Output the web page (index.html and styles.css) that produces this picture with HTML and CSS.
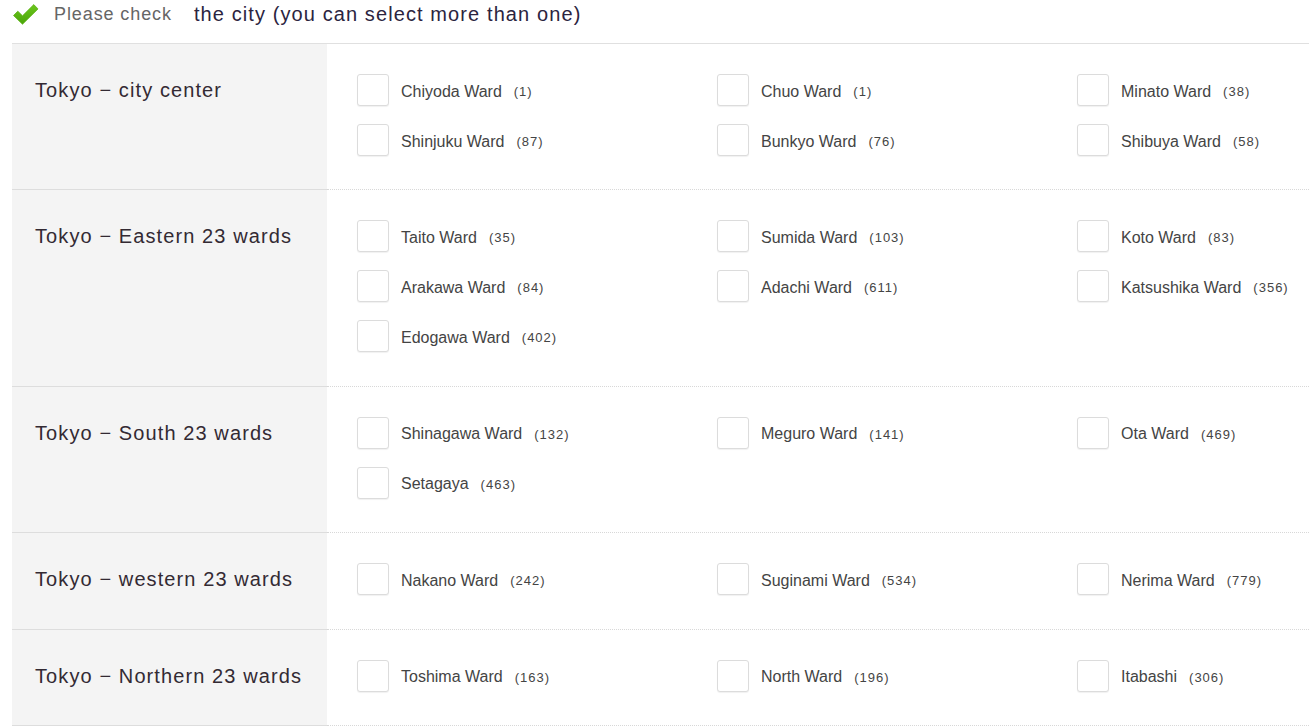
FILE: index.html
```html
<!DOCTYPE html>
<html lang="en">
<head>
<meta charset="utf-8">
<title>Select city</title>
<link rel="stylesheet" href="styles.css">
</head>
<body>
<div class="page">
  <div class="head">
    <svg class="check-icon" width="28" height="22" viewBox="0 0 28 22" aria-hidden="true">
      <defs>
        <linearGradient id="g" x1="0" y1="0" x2="0" y2="1">
          <stop offset="0" stop-color="#6cc61c"/>
          <stop offset="1" stop-color="#4aa50a"/>
        </linearGradient>
      </defs>
      <path d="M1.5 12.5 L5.8 8.2 L10.5 12.8 L21.8 1.6 L26 5.9 L10.5 21.2 Z" fill="url(#g)" stroke="#5cb314" stroke-width="0.8" stroke-linejoin="round"/>
    </svg>
    <span class="head-note">Please check</span>
    <span class="head-title">the city (you can select more than one)</span>
  </div>
  <div class="table">
    <div class="row">
      <div class="area">Tokyo − city center</div>
      <div class="wards">
        <label class="ward"><span class="box"></span><span class="name">Chiyoda Ward</span><span class="count">(1)</span></label>
        <label class="ward"><span class="box"></span><span class="name">Chuo Ward</span><span class="count">(1)</span></label>
        <label class="ward"><span class="box"></span><span class="name">Minato Ward</span><span class="count">(38)</span></label>
        <label class="ward"><span class="box"></span><span class="name">Shinjuku Ward</span><span class="count">(87)</span></label>
        <label class="ward"><span class="box"></span><span class="name">Bunkyo Ward</span><span class="count">(76)</span></label>
        <label class="ward"><span class="box"></span><span class="name">Shibuya Ward</span><span class="count">(58)</span></label>
      </div>
    </div>
    <div class="row">
      <div class="area">Tokyo − Eastern 23 wards</div>
      <div class="wards">
        <label class="ward"><span class="box"></span><span class="name">Taito Ward</span><span class="count">(35)</span></label>
        <label class="ward"><span class="box"></span><span class="name">Sumida Ward</span><span class="count">(103)</span></label>
        <label class="ward"><span class="box"></span><span class="name">Koto Ward</span><span class="count">(83)</span></label>
        <label class="ward"><span class="box"></span><span class="name">Arakawa Ward</span><span class="count">(84)</span></label>
        <label class="ward"><span class="box"></span><span class="name">Adachi Ward</span><span class="count">(611)</span></label>
        <label class="ward"><span class="box"></span><span class="name">Katsushika Ward</span><span class="count">(356)</span></label>
        <label class="ward"><span class="box"></span><span class="name">Edogawa Ward</span><span class="count">(402)</span></label>
      </div>
    </div>
    <div class="row">
      <div class="area">Tokyo − South 23 wards</div>
      <div class="wards">
        <label class="ward"><span class="box"></span><span class="name">Shinagawa Ward</span><span class="count">(132)</span></label>
        <label class="ward"><span class="box"></span><span class="name">Meguro Ward</span><span class="count">(141)</span></label>
        <label class="ward"><span class="box"></span><span class="name">Ota Ward</span><span class="count">(469)</span></label>
        <label class="ward"><span class="box"></span><span class="name">Setagaya</span><span class="count">(463)</span></label>
      </div>
    </div>
    <div class="row">
      <div class="area">Tokyo − western 23 wards</div>
      <div class="wards">
        <label class="ward"><span class="box"></span><span class="name">Nakano Ward</span><span class="count">(242)</span></label>
        <label class="ward"><span class="box"></span><span class="name">Suginami Ward</span><span class="count">(534)</span></label>
        <label class="ward"><span class="box"></span><span class="name">Nerima Ward</span><span class="count">(779)</span></label>
      </div>
    </div>
    <div class="row">
      <div class="area">Tokyo − Northern 23 wards</div>
      <div class="wards">
        <label class="ward"><span class="box"></span><span class="name">Toshima Ward</span><span class="count">(163)</span></label>
        <label class="ward"><span class="box"></span><span class="name">North Ward</span><span class="count">(196)</span></label>
        <label class="ward"><span class="box"></span><span class="name">Itabashi</span><span class="count">(306)</span></label>
      </div>
    </div>
  </div>
</div>
</body>
</html>
```

FILE: styles.css
```css
html, body {
  margin: 0;
  padding: 0;
  background: #fff;
}
body {
  font-family: "Liberation Sans", Arial, sans-serif;
  color: #333;
  overflow: hidden;
}
.page {
  margin-left: 12px;
  width: 1297px;
}
.head {
  display: flex;
  align-items: center;
  height: 28px;
  padding-bottom: 15px;
}
.check-icon {
  display: block;
  margin: 0 14px 0 0;
}
.head-note {
  font-size: 18px;
  color: #666;
  letter-spacing: 0.9px;
  margin-right: 22px;
}
.head-title {
  font-size: 20px;
  color: #2b2440;
  letter-spacing: 1.1px;
}
.table {
  border-top: 1px solid #e0e0e0;
}
.row {
  display: flex;
}
.area {
  width: 292px;
  flex: none;
  background: #f4f4f4;
  padding: 30px 0 15px 23px;
  font-size: 20px;
  line-height: 32px;
  color: #332a33;
  letter-spacing: 1.1px;
  white-space: nowrap;
  border-bottom: 1px solid #dddddd;
}
.wards {
  flex: 1;
  min-width: 0;
  display: grid;
  grid-template-columns: 360px 360px 1fr;
  grid-auto-rows: 32px;
  row-gap: 18px;
  padding: 30px 0 33.4px 30px;
  border-bottom: 1px dotted #d8d8d8;
  align-content: start;
}
.ward {
  display: flex;
  align-items: center;
  font-size: 16px;
  color: #444;
  white-space: nowrap;
}
.box {
  width: 30px;
  height: 30px;
  border: 1px solid #dcdcdc;
  border-radius: 3px;
  background: #fff;
  box-shadow: 0 1px 1px rgba(0,0,0,0.06);
  margin-right: 12px;
  flex: none;
}
.name {
  margin-right: 12px;
  padding-top: 3px;
}
.count {
  font-size: 13px;
  letter-spacing: 1px;
  padding-top: 3px;
  color: #444;
}
```
